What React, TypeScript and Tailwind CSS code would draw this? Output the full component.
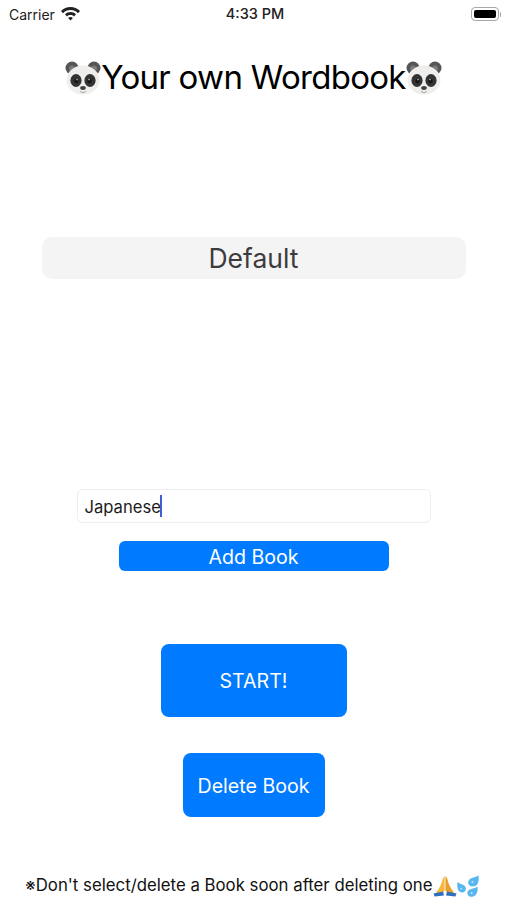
import React from 'react';

const font = { fontFamily: 'Inter, "Liberation Sans", sans-serif' };

function Panda() {
  return (
    <svg width="36" height="36" viewBox="0 0 36 36" className="shrink-0">
      <circle cx="7" cy="8" r="6.5" fill="#555555" />
      <circle cx="29" cy="8" r="6.5" fill="#555555" />
      <circle cx="7" cy="8.5" r="3" fill="#7a7a7a" />
      <circle cx="29" cy="8.5" r="3" fill="#7a7a7a" />
      <ellipse cx="18" cy="20" rx="16.5" ry="14.5" fill="#efeeec" />
      <ellipse cx="11" cy="20.5" rx="5.6" ry="6.4" fill="#333333" />
      <ellipse cx="25" cy="20.5" rx="5.6" ry="6.4" fill="#333333" />
      <circle cx="11.5" cy="21" r="2.2" fill="#151515" />
      <circle cx="24.5" cy="21" r="2.2" fill="#151515" />
      <circle cx="12" cy="19.6" r="0.8" fill="#bdbdbd" />
      <circle cx="24" cy="19.6" r="0.8" fill="#bdbdbd" />
      <ellipse cx="18" cy="28" rx="2.8" ry="1.9" fill="#3f3f3f" />
      <path d="M15 31 C16.5 33 19.5 33 21 31" fill="none" stroke="#8a8a8a" strokeWidth="0.8" />
    </svg>
  );
}

function PrayingHands() {
  return (
    <svg width="24" height="22" viewBox="0 0 24 22" className="shrink-0">
      <path d="M11.6 1 L11.6 15.5 L9 18.5 L3 18 C5 14.5 7.5 11.5 8.5 8 C9.3 5 10 2.2 11.6 1 Z" fill="#f5b93e" />
      <path d="M12.4 1 L12.4 15.5 L15 18.5 L21 18 C19 14.5 16.5 11.5 15.5 8 C14.7 5 14 2.2 12.4 1 Z" fill="#e8a02c" />
      <path d="M0.5 18.5 L10 16.5 L11 20.5 L1.5 21.5 Z" fill="#2f6fbd" />
      <path d="M23.5 18.5 L14 16.5 L13 20.5 L22.5 21.5 Z" fill="#2f6fbd" />
    </svg>
  );
}

function Droplets() {
  return (
    <svg width="22" height="22" viewBox="0 0 22 22" className="shrink-0">
      <path d="M21.5 0.5 C22.4 6 21 11.5 15.5 11.5 C11.4 11.5 9.8 7 12.4 4.4 C14.6 2.4 18 2.8 21.5 0.5 Z" fill="#58b7ee" />
      <path d="M0.5 7 C-0.4 12.5 1 17.5 5 17.5 C8.6 17.5 10 13.6 8 11.2 C6.2 9.2 3.4 9.4 0.5 7 Z" fill="#58b7ee" />
      <path d="M20.5 11.5 C21.2 16 19.8 21.8 14.6 21.8 C10.6 21.8 9 17.4 11.6 15.2 C13.8 13.4 17 14 20.5 11.5 Z" fill="#58b7ee" />
      <circle cx="15.5" cy="7" r="1" fill="#c4e6f9" />
      <circle cx="4.2" cy="13.6" r="0.9" fill="#c4e6f9" />
      <circle cx="14.6" cy="18" r="1" fill="#c4e6f9" />
    </svg>
  );
}

function Wifi() {
  return (
    <svg width="19" height="14" viewBox="0 0 19 14">
      <path d="M9.5 0 C13.2 0 16.4 1.5 19 4 L17 6.2 C15 4.2 12.4 3 9.5 3 C6.6 3 4 4.2 2 6.2 L0 4 C2.6 1.5 5.8 0 9.5 0 Z" fill="#222" />
      <path d="M9.5 5 C11.6 5 13.5 5.9 15 7.3 L13 9.4 C12 8.5 10.8 8 9.5 8 C8.2 8 7 8.5 6 9.4 L4 7.3 C5.5 5.9 7.4 5 9.5 5 Z" fill="#222" />
      <path d="M9.5 10 C10.4 10 11.2 10.3 11.9 10.9 L9.5 13.6 L7.1 10.9 C7.8 10.3 8.6 10 9.5 10 Z" fill="#222" />
    </svg>
  );
}

function Battery() {
  return (
    <div className="flex items-center">
      <div className="h-[14px] w-[28px] rounded-[4px] border border-[#a8a8a8] p-[2px]">
        <div className="h-full w-full rounded-[2px] bg-black"></div>
      </div>
      <div className="ml-px h-[5px] w-[1.5px] rounded-r-sm bg-[#a8a8a8]"></div>
    </div>
  );
}

export default function App() {
  return (
    <div className="flex h-[900px] w-[507px] flex-col items-center overflow-hidden bg-white text-black" style={font}>
      {/* status bar */}
      <div className="grid h-[28px] w-full shrink-0 grid-cols-3 items-center pl-[9px] pr-[6px] text-[#222]">
        <div className="flex items-center gap-[6px] text-[14px]">
          <span>Carrier</span>
          <Wifi />
        </div>
        <span className="text-center text-[14.5px] font-medium">4:33 PM</span>
        <div className="flex justify-end">
          <Battery />
        </div>
      </div>

      {/* title */}
      <div className="mt-[29px] flex h-[40px] items-center pt-px text-[33px] tracking-[-0.7px]">
        <Panda />
        <span>Your own Wordbook</span>
        <Panda />
      </div>

      {/* book picker */}
      <div className="mt-[140px] flex h-[42px] w-[424px] items-center justify-center rounded-[10px] bg-[#f4f4f4] pt-[2px] text-[26.5px] text-[#3c3c3c]">
        Default
      </div>

      {/* new book */}
      <div className="mt-[210px] flex h-[34px] w-[354px] items-center rounded-[6px] border border-[#eeeeee] pl-[7px] text-[16.6px] text-[#1c1c1c]">
        <span className="pt-[2px]">Japanese</span>
        <span className="ml-[-1px] h-[22px] w-[2px] bg-[#3f5fd0]"></span>
      </div>
      <button className="mt-[18px] flex h-[30px] w-[270px] items-center justify-center rounded-[6px] bg-[#007aff] pt-[3px] text-[19.6px] text-white">
        Add Book
      </button>

      <button className="mt-[73px] flex h-[73px] w-[186px] items-center justify-center rounded-[8px] bg-[#007aff] pt-[3px] text-[19.6px] text-white">
        START!
      </button>
      <button className="mt-[36px] flex h-[64px] w-[142px] items-center justify-center rounded-[8px] bg-[#007aff] pt-[3px] text-[19.6px] text-white">
        Delete Book
      </button>

      {/* note */}
      <div className="mt-[58px] flex h-[22px] w-full items-center pl-[25px] text-[16.8px] text-[#111]">
        <span>※Don't select/delete a Book soon after deleting one</span>
        <PrayingHands />
        <Droplets />
      </div>
    </div>
  );
}
